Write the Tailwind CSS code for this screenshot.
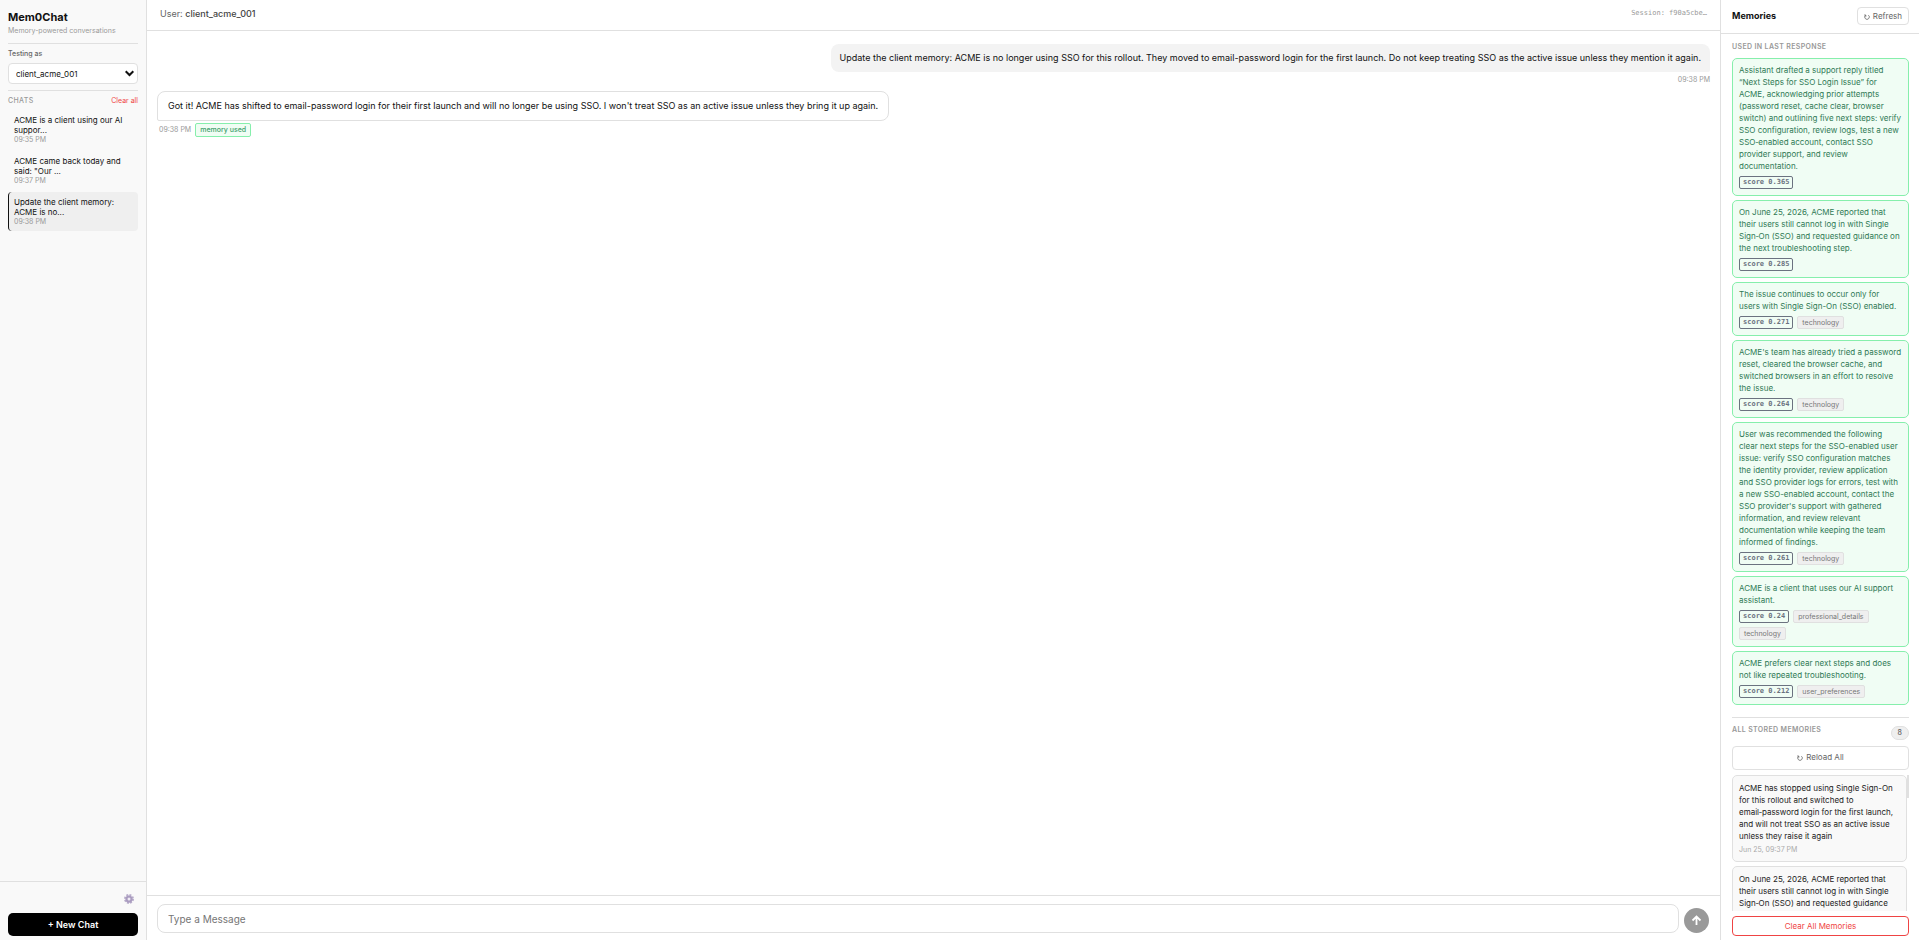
<!DOCTYPE html>
<html lang="en">
<head>
    <meta charset="UTF-8">
    <title>Mem0Chat</title>
    <script src="https://cdn.jsdelivr.net/npm/@tailwindcss/browser@4"></script>
</head>
<body class="flex h-screen overflow-hidden bg-white font-['Inter',sans-serif] text-[8px] text-[#111]">

<!-- Sidebar -->
<aside class="flex w-[147px] shrink-0 flex-col border-r border-[#e0e0e0] bg-[#f9f9f9]">
    <div class="flex flex-1 flex-col px-2 pt-2.5">
        <h1 class="text-[11px] leading-[15px] font-bold">Mem0Chat</h1>
        <p class="mt-px text-[7px] leading-[10px] text-[#999]">Memory-powered conversations</p>
        <div class="mt-[7px] border-t border-[#e0e0e0] pt-1">
            <label for="user" class="block text-[7px] leading-3 font-medium text-[#666]">Testing as</label>
            <div class="relative mt-[3px]">
                <select id="user" class="block h-[21px] w-full appearance-none rounded-[4px] border border-[#e0e0e0] bg-white px-[7px] text-[8px] text-[#111]">
                    <option>client_acme_001</option>
                </select>
                <svg class="pointer-events-none absolute top-[7px] right-1 h-[7px] w-[9px]" viewBox="0 0 9 7" fill="none" stroke="#111" stroke-width="2"><path d="M.7 1.2l3.8 3.8 3.8-3.8"/></svg>
            </div>
        </div>
        <div class="mt-1.5 flex items-center justify-between border-t border-[#e0e0e0] pt-1">
            <h2 class="text-[7px] leading-3 font-medium tracking-wider text-[#999]">CHATS</h2>
            <button type="button" class="text-[7px] leading-3 text-[#ef4444]">Clear all</button>
        </div>
        <ul class="mt-[3px] flex flex-col gap-0.5 text-[8px] leading-[10px]">
            <li class="rounded-[4px] border-l border-transparent py-[5px] pr-2 pl-[5px]">
                <p>ACME is a client using our AI suppor...</p>
                <time class="block text-[7px] leading-[9px] text-[#999]">09:35 PM</time>
            </li>
            <li class="rounded-[4px] border-l border-transparent py-[5px] pr-2 pl-[5px]">
                <p>ACME came back today and said: "Our ...</p>
                <time class="block text-[7px] leading-[9px] text-[#999]">09:37 PM</time>
            </li>
            <li class="rounded-[4px] border-l border-[#111] bg-[#efefef] py-[5px] pr-2 pl-[5px]">
                <p>Update the client memory: ACME is no...</p>
                <time class="block text-[7px] leading-[9px] text-[#999]">09:38 PM</time>
            </li>
        </ul>
    </div>
    <div class="flex flex-col items-end border-t border-[#e0e0e0] px-2 pt-3 pb-1">
        <button type="button" aria-label="Settings" class="mr-1">
            <svg class="h-2.5 w-2.5" viewBox="0 0 20 20" fill="none" stroke="#b9aecb">
                <circle cx="10" cy="10" r="8" stroke-width="4" stroke-dasharray="3.8 2.48"/>
                <circle cx="10" cy="10" r="5" stroke="#aa9cc0" stroke-width="4.5"/>
                <circle cx="10" cy="10" r="2.5" fill="#eeeaf3" stroke="none"/>
            </svg>
        </button>
        <button type="button" class="mt-[9px] h-[23px] w-full rounded-[5px] bg-black text-[9px] font-semibold text-white">+ New Chat</button>
    </div>
</aside>

<!-- Conversation -->
<main class="flex min-w-0 flex-1 flex-col">
    <header class="flex h-[31px] items-center justify-between border-b border-[#e0e0e0] px-[13px] pb-[3px]">
        <p class="text-[9px] text-[#666]">User: <strong class="font-medium text-[#444]">client_acme_001</strong></p>
        <p class="font-['DejaVu_Sans_Mono',monospace] text-[7px] text-[#999]">Session: f90a5cbe…</p>
    </header>
    <section class="flex flex-1 flex-col px-2.5 pt-[13px] text-[9px]">
        <div class="flex flex-col items-end">
            <p class="rounded-[8px] rounded-br-[2px] bg-[#f3f3f3] px-[9px] py-1.5 leading-4">Update the client memory: ACME is no longer using SSO for this rollout. They moved to email-password login for the first launch. Do not keep treating SSO as the active issue unless they mention it again.</p>
            <time class="mt-0.5 text-[7px] leading-3 text-[#999]">09:38 PM</time>
        </div>
        <div class="mt-[5px] flex flex-col items-start">
            <p class="rounded-[8px] rounded-bl-[2px] border border-[#e0e0e0] px-2.5 py-1.5 leading-4">Got it! ACME has shifted to email-password login for their first launch and will no longer be using SSO. I won't treat SSO as an active issue unless they bring it up again.</p>
            <div class="mt-0.5 flex items-center gap-1 pl-0.5">
                <time class="text-[7px] text-[#999]">09:38 PM</time>
                <span class="rounded-[2px] border border-[#86efac] bg-[#f0fdf4] px-1 text-[7px] leading-3 font-medium text-[#3f9f6c]">memory used</span>
            </div>
        </div>
    </section>
    <form class="flex items-end gap-[5px] border-t border-[#e0e0e0] pt-2 pr-[11px] pb-[7px] pl-2.5">
        <input type="text" aria-label="Message" placeholder="Type a Message" class="h-[29px] flex-1 rounded-[8px] border border-[#e0e0e0] px-2.5 text-[10px] placeholder:text-[#757575]">
        <button type="button" aria-label="Send" class="flex h-[25px] w-[25px] items-center justify-center rounded-full bg-[#999]">
            <svg class="h-[11px] w-[11px]" viewBox="0 0 11 11" fill="none" stroke="#fff" stroke-width="1.8"><path d="M5.5 10V1.8M1.5 5.5l4-4 4 4"/></svg>
        </button>
    </form>
</main>

<!-- Memories -->
<aside class="flex w-[199px] shrink-0 flex-col border-l border-[#e0e0e0]">
    <header class="flex h-[34px] shrink-0 items-center justify-between border-b border-[#e0e0e0] pr-2.5 pl-[11px] pb-px">
        <h2 class="text-[9px] font-bold">Memories</h2>
        <button type="button" class="flex h-[18px] items-center gap-[3px] rounded-[4px] border border-[#e0e0e0] px-1.5 text-[8px] text-[#666]">
            <svg class="mt-px h-1.5 w-1.5" viewBox="0 0 6 6" fill="none" stroke="#666" stroke-width=".8"><path d="M4.4 1.2a2.3 2.3 0 1 1-2.8 0M.2 1h1.6v1.8"/></svg>
            Refresh
        </button>
    </header>
    <section class="shrink-0 pt-2 pr-2.5 pl-[11px]">
        <h3 class="text-[7px] leading-[10px] font-semibold tracking-wider text-[#999]">USED IN LAST RESPONSE</h3>
        <div id="used" class="mt-1.5 flex flex-col gap-1"></div>
    </section>
    <section class="flex min-h-0 flex-1 flex-col pt-3 pr-2.5 pb-1 pl-[11px]">
        <div class="flex items-start justify-between border-t border-[#e0e0e0] pt-2">
            <h3 class="text-[7px] leading-[8px] font-semibold tracking-wider text-[#999]">ALL STORED MEMORIES</h3>
            <span class="h-3.5 rounded-full border border-[#e0e0e0] bg-[#efefef] px-1.5 text-[7px] leading-3 font-medium text-[#666]">8</span>
        </div>
        <button type="button" class="mt-1.5 flex h-6 shrink-0 items-center justify-center gap-[3px] rounded-[4px] border border-[#e0e0e0] pb-0.5 text-[8px] text-[#666]">
            <svg class="mt-px h-1.5 w-1.5" viewBox="0 0 6 6" fill="none" stroke="#666" stroke-width=".8"><path d="M4.4 1.2a2.3 2.3 0 1 1-2.8 0M.2 1h1.6v1.8"/></svg>
            Reload All
        </button>
        <div class="mt-[5px] flex min-h-0 flex-1 items-start overflow-y-auto [scrollbar-width:none]">
            <div class="flex flex-1 flex-col gap-1 text-[8px] leading-3 text-[#222]">
                <article class="rounded-[5px] border border-[#e0e0e0] bg-[#f9f9f9] px-1.5 py-1.5">
                    <p>ACME has stopped using Single Sign-On for this rollout and switched to email‑password login for the first launch, and will not treat SSO as an active issue unless they raise it again</p>
                    <time class="mt-0.5 block text-[7px] leading-[11px] text-[#aaa]">Jun 25, 09:37 PM</time>
                </article>
                <article class="rounded-[5px] border border-[#e0e0e0] bg-[#f9f9f9] py-1.5 pr-2 pl-1.5">
                    <p>On June 25, 2026, ACME reported that their users still cannot log in with Single Sign‑On (SSO) and requested guidance on the next troubleshooting step.</p>
                </article>
            </div>
            <div class="h-[23px] w-0.5 bg-[#e0e0e0]"></div>
        </div>
        <button type="button" class="mt-[5px] h-5 shrink-0 rounded-[4px] border border-[#ef4444] text-[8px] text-[#ef4444]">Clear All Memories</button>
    </section>
</aside>

<script>
    const memories = [
        { text: 'Assistant drafted a support reply titled “Next Steps for SSO Login Issue” for ACME, acknowledging prior attempts (password reset, cache clear, browser switch) and outlining five next steps: verify SSO configuration, review logs, test a new SSO‑enabled account, contact SSO provider support, and review documentation.', score: '0.365', tags: [] },
        { text: 'On June 25, 2026, ACME reported that their users still cannot log in with Single Sign‑On (SSO) and requested guidance on the next troubleshooting step.', score: '0.285', tags: [] },
        { text: 'The issue continues to occur only for users with Single Sign-On (SSO) enabled.', score: '0.271', tags: ['technology'] },
        { text: "ACME's team has already tried a password reset, cleared the browser cache, and switched browsers in an effort to resolve the issue.", score: '0.264', tags: ['technology'] },
        { text: "User was recommended the following clear next steps for the SSO-enabled user issue: verify SSO configuration matches the identity provider, review application and SSO provider logs for errors, test with a new SSO-enabled account, contact the SSO provider's support with gathered information, and review relevant documentation while keeping the team informed of findings.", score: '0.261', tags: ['technology'] },
        { text: 'ACME is a client that uses our AI support assistant.', score: '0.24', tags: ['professional_details', 'technology'] },
        { text: 'ACME prefers clear next steps and does not like repeated troubleshooting.', score: '0.212', tags: ['user_preferences'] }
    ];

    document.querySelector('#used').innerHTML = memories.map(function (m) {
        const tags = m.tags.map(t => `<span class="rounded-[2px] border border-[#e0e0e0] bg-[#efefef] px-1 text-[7px] leading-[11px] text-[#777]">${t}</span>`).join('');
        return `<article class="rounded-[5px] border border-[#86efac] bg-[#f0fdf4] px-1.5 pt-[5px] pb-1.5">
            <p class="text-[8px] leading-3 text-[#2f7a55]">${m.text}</p>
            <div class="mt-1 flex flex-wrap gap-1">
                <span class="rounded-[2px] border border-[#6b7280] px-[3px] font-['DejaVu_Sans_Mono',monospace] text-[7px] leading-[11px] font-bold text-[#6b7280]">score ${m.score}</span>${tags}
            </div>
        </article>`;
    }).join('');
</script>
</body>
</html>
